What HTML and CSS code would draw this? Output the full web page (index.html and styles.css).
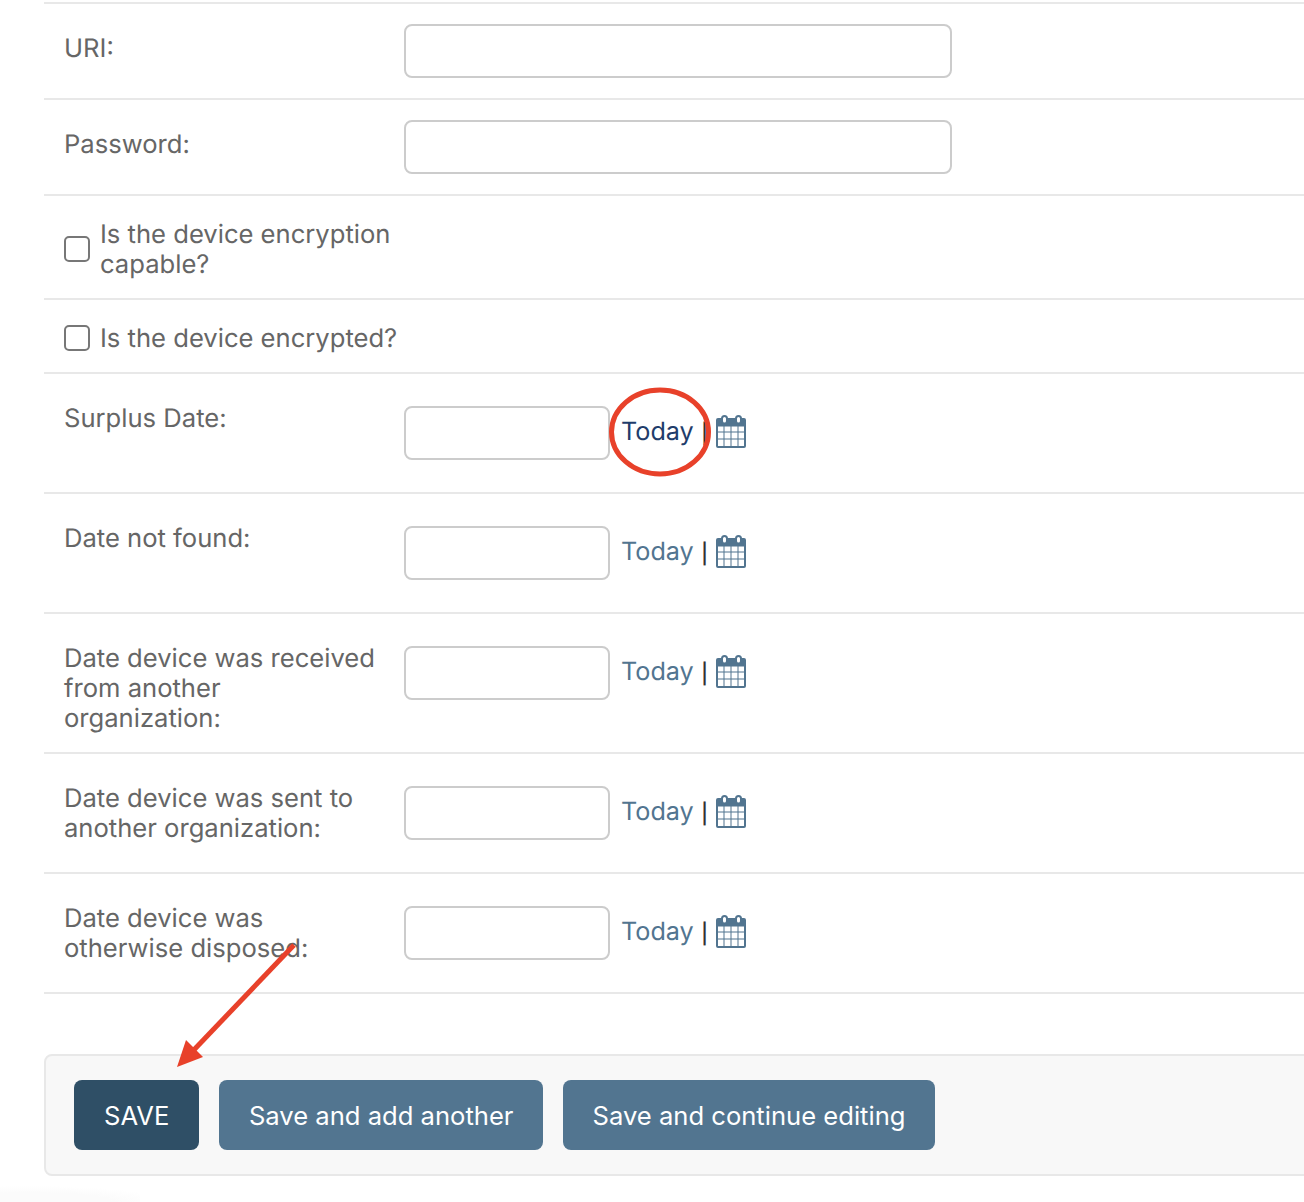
FILE: index.html
```html
<!DOCTYPE html>
<html lang="en">
<head>
<meta charset="utf-8">
<title>Device form</title>
<link rel="stylesheet" href="styles.css">
</head>
<body>
<svg width="0" height="0" class="defs">
  <symbol id="cal" viewBox="0 0 30 33">
    <path class="cal-body" fill-rule="evenodd" d="M2 3H28a2 2 0 0 1 2 2V31a2 2 0 0 1-2 2H2a2 2 0 0 1-2-2V5a2 2 0 0 1 2-2zM2 11.500V16.500H7.500V11.500zM8.500 11.500V16.500H14.500V11.500zM15.500 11.500V16.500H21.500V11.500zM22.500 11.500V16.500H28V11.500zM2 17.500V23.500H7.500V17.500zM8.500 17.500V23.500H14.500V17.500zM15.500 17.500V23.500H21.500V17.500zM22.500 17.500V23.500H28V17.500zM2 24.500V31H7.500V24.500zM8.500 24.500V31H14.500V24.500zM15.500 24.500V31H21.500V24.500zM22.500 24.500V31H28V24.500z"/>
    <rect class="cal-loop" x="6" y="1" width="5" height="7.500" rx="2.500"/>
    <rect class="cal-loop" x="20" y="1" width="5" height="7.500" rx="2.500"/>
  </symbol>
</svg>
<main class="page">
  <div class="row row-first">
    <label class="label">URI:</label>
    <input class="input input-wide" type="text">
  </div>
  <div class="row">
    <label class="label">Password:</label>
    <input class="input input-wide" type="text">
  </div>
  <div class="row row-check">
    <input class="check" type="checkbox">
    <label class="check-label">Is the device encryption capable?</label>
  </div>
  <div class="row row-check">
    <input class="check" type="checkbox">
    <label class="check-label check-label-wide">Is the device encrypted?</label>
  </div>
  <div class="row">
    <label class="label">Surplus Date:</label>
    <div class="date"><input class="input input-date" type="text"><a class="today today-active">Today</a><span class="sep">|</span><svg class="cal"><use href="#cal"/></svg></div>
  </div>
  <div class="row">
    <label class="label">Date not found:</label>
    <div class="date"><input class="input input-date" type="text"><a class="today">Today</a><span class="sep">|</span><svg class="cal"><use href="#cal"/></svg></div>
  </div>
  <div class="row">
    <label class="label">Date device was received from another organization:</label>
    <div class="date"><input class="input input-date" type="text"><a class="today">Today</a><span class="sep">|</span><svg class="cal"><use href="#cal"/></svg></div>
  </div>
  <div class="row">
    <label class="label">Date device was sent to another organization:</label>
    <div class="date"><input class="input input-date" type="text"><a class="today">Today</a><span class="sep">|</span><svg class="cal"><use href="#cal"/></svg></div>
  </div>
  <div class="row">
    <label class="label">Date device was otherwise disposed:</label>
    <div class="date"><input class="input input-date" type="text"><a class="today">Today</a><span class="sep">|</span><svg class="cal"><use href="#cal"/></svg></div>
  </div>
  <div class="submit-row">
    <button class="btn btn-default">SAVE</button>
    <button class="btn">Save and add another</button>
    <button class="btn">Save and continue editing</button>
  </div>
</main>
<div class="corner-fade"></div>
<svg class="annotations" width="1304" height="1202" viewBox="0 0 1304 1202">
  <ellipse class="mark" cx="660" cy="432" rx="48.500" ry="42"/>
  <path class="mark" d="M294 945L190 1054"/>
  <path class="mark-fill" d="M177 1067L186 1040L203 1057z"/>
</svg>
</body>
</html>
```
FILE: styles.css
```css
html, body { margin: 0; padding: 0; background: #fff; }
body {
  position: relative;
  height: 1202px;
  overflow: hidden;
  font-family: Inter, "Liberation Sans", sans-serif;
  font-size: 25.6px;
  line-height: 30px;
  color: #666;
  text-rendering: geometricPrecision;
}
.defs { position: absolute; }
.page { padding: 2px 0 0 44px; }
.row {
  display: flex;
  align-items: flex-start;
  padding: 20px;
  border-bottom: 2px solid #e8e8e8;
}
.row-first { border-top: 2px solid #e8e8e8; }
.row-check { align-items: center; }
.label {
  width: 340px;
  flex: none;
  box-sizing: border-box;
  padding: 10px 20px 0 0;
  margin-bottom: -2px;
}
.input {
  box-sizing: border-box;
  height: 54px;
  margin: 0;
  background: #fff;
  border: 2px solid #ccc;
  border-radius: 8px;
  flex: none;
}
.input-wide { width: 548px; }
.input-date { width: 206px; margin-right: 11px; }
.date { display: flex; align-items: center; margin: 12px 0; }
.today { color: #527590; margin-bottom: 2px; font-size: 25.2px; }
.today-active { color: #1f3d6b; }
.sep { color: #333; margin: 0 0 2px 7.500px; font-family: "Liberation Sans", sans-serif; }
.cal { width: 30px; height: 33px; margin: 0 0 4px 8.500px; }
.cal-body { fill: #527590; }
.cal-loop { fill: #fff; stroke: #527590; stroke-width: 2; }
.check {
  appearance: none;
  box-sizing: border-box;
  width: 26px;
  height: 26px;
  margin: 4px 10px 0 0;
  border: 2px solid #777;
  border-radius: 5px;
  background: #fff;
  flex: none;
}
.check-label { width: 300px; padding-top: 4px; margin-bottom: -2px; }
.check-label-wide { width: 340px; }
.submit-row {
  display: flex;
  gap: 20px;
  margin-top: 60px;
  margin-right: -20px;
  padding: 24px 28px;
  background: #f8f8f8;
  border: 2px solid #e8e8e8;
  border-radius: 8px;
}
.btn {
  height: 70px;
  padding: 2px 29.500px 0;
  border: 0;
  border-radius: 8px;
  background: #527590;
  color: #fff;
  font: inherit;
}
.btn-default { background: #2f4f66; padding: 2px 30px 0; }
.corner-fade {
  position: absolute;
  left: 0;
  bottom: 0;
  width: 140px;
  height: 16px;
  background: radial-gradient(ellipse 140px 16px at 20% 100%, #fbfbfb 60%, #fff 100%);
}
.annotations { position: absolute; left: 0; top: 0; pointer-events: none; }
.mark { fill: none; stroke: #e8412a; stroke-width: 5; }
.mark-fill { fill: #e8412a; }
```
